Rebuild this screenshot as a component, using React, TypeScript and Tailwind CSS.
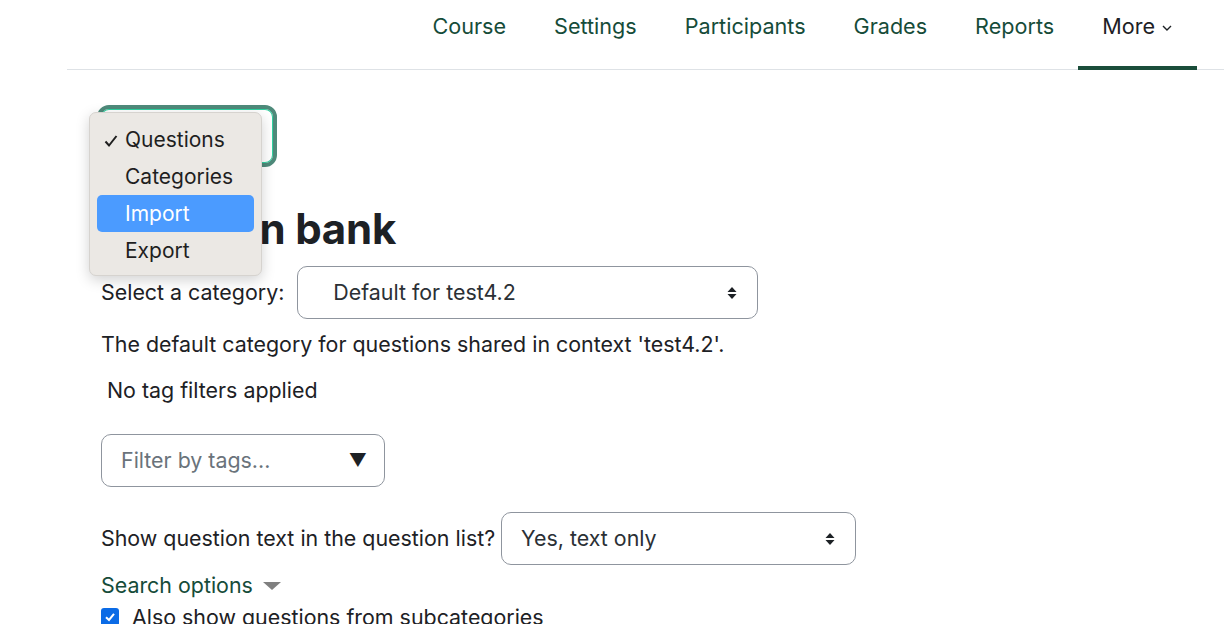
import { ReactNode } from 'react';

const navItems = ['Course', 'Settings', 'Participants', 'Grades', 'Reports'];

/** Small up/down arrows used at the right edge of native selects. */
function SelectArrows() {
  return (
    <svg width="12" height="16" viewBox="0 0 12 16" className="shrink-0">
      <path d="M6 2 L10.5 7 H1.5 Z" fill="#1d2125" />
      <path d="M6 14 L10.5 9 H1.5 Z" fill="#1d2125" />
    </svg>
  );
}

function FakeSelect({ width, children }: { width: string; children: ReactNode }) {
  return (
    <div
      className={`${width} h-[53px] rounded-[10px] border border-[#8f959e] bg-white flex items-center justify-between pl-[19px] pr-[19px] text-[21.4px] text-[#2b3035]`}
    >
      <span>{children}</span>
      <SelectArrows />
    </div>
  );
}

export default function App() {
  return (
    <div className="relative w-[1224px] h-[624px] overflow-hidden bg-white text-[#1d2125] font-['Inter',sans-serif]">
      {/* Secondary navigation */}
      <nav className="ml-[67px] h-[70px] border-b border-[#dee2e6] flex justify-end pr-[27px]">
        {navItems.map((item) => (
          <a key={item} className="px-6 h-full flex items-center pb-[16px] text-[21.6px] text-[#164c39]">
            {item}
          </a>
        ))}
        <a className="relative px-6 h-full flex items-center pb-[16px] text-[21.6px] text-[#1d2125]">
          More
          <svg width="12" height="8" viewBox="0 0 12 8" className="ml-[6px] mt-[2px]">
            <path d="M2 2 L6 6 L10 2" fill="none" stroke="#1d2125" strokeWidth="1.4" />
          </svg>
          <span className="absolute left-0 right-0 bottom-[-1px] h-[4px] bg-[#1a4d3a]" />
        </a>
      </nav>

      <main className="pl-[101px]">
        {/* Focused tertiary navigation select (its menu is open) */}
        <div className="ml-[-4px] mt-[35px] w-[180px] h-[62px] rounded-[12px] border-[4px] border-[#4e8a7a] shadow-[inset_0_0_0_1px_#2fd3a1] bg-white" />

        <h2 className="mt-[37px] text-[42px] leading-[50px] font-bold tracking-[-0.2px]">Question bank</h2>

        <div className="mt-[12px] flex items-center gap-[13px]">
          <span className="text-[21.4px]">Select a category:</span>
          <FakeSelect width="w-[461px]">
            <span className="pl-[16px]">Default for test4.2</span>
          </FakeSelect>
        </div>

        <p className="mt-[10px] text-[21.4px] leading-[30px]">
          The default category for questions shared in context 'test4.2'.
        </p>

        <p className="mt-[16px] pl-[6px] text-[21.4px] leading-[30px]">No tag filters applied</p>

        <div className="mt-[29px] w-[284px] h-[53px] rounded-[10px] border border-[#8f959e] flex items-center justify-between pl-[19px] pr-[17px] text-[21.4px] text-[#6a737b]">
          <span>Filter by tags...</span>
          <span className="text-[#1d2125] text-[18px]">▼</span>
        </div>

        <div className="mt-[25px] flex items-center gap-[6px]">
          <span className="text-[21.4px]">Show question text in the question list?</span>
          <FakeSelect width="w-[355px]">Yes, text only</FakeSelect>
        </div>

        <div className="mt-[5px] flex items-center text-[21.4px] leading-[30px] text-[#164c39]">
          Search options
          <svg width="18" height="10" viewBox="0 0 18 10" className="ml-[10px] mt-[2px]">
            <path d="M0 1 H18 L9 9 Z" fill="#808080" />
          </svg>
        </div>

        <label className="mt-[2px] flex items-center gap-[13px] text-[21.4px] leading-[30px]">
          <span className="w-[18px] h-[18px] rounded-[3px] bg-[#0b6be6] flex items-center justify-center">
            <svg width="12" height="12" viewBox="0 0 12 12">
              <path d="M2 6.2 L5 9 L10 2.8" fill="none" stroke="white" strokeWidth="2" />
            </svg>
          </span>
          Also show questions from subcategories
        </label>
      </main>

      {/* Open native select menu */}
      <div className="absolute left-[89px] top-[112px] w-[173px] pt-[8px] pb-[6px] rounded-[7px] bg-[#ebe8e4] border border-[#d6d3cf] shadow-[0_4px_14px_rgba(0,0,0,0.18)] text-[21px] text-[#1f1f1f]">
        {['Questions', 'Categories', 'Import', 'Export'].map((opt) => (
          <div
            key={opt}
            className={
              opt === 'Import'
                ? 'mx-[7px] h-[37px] rounded-[5px] bg-[#4b9bff] text-white flex items-center pl-[28px]'
                : 'mx-[7px] h-[37px] flex items-center pl-[28px] relative'
            }
          >
            {opt === 'Questions' && (
              <svg width="14" height="14" viewBox="0 0 14 14" className="absolute left-[7px] top-[13px]">
                <path d="M1.5 7.5 L5 11.5 L12.5 2" fill="none" stroke="#1f1f1f" strokeWidth="2" />
              </svg>
            )}
            {opt}
          </div>
        ))}
      </div>
    </div>
  );
}
